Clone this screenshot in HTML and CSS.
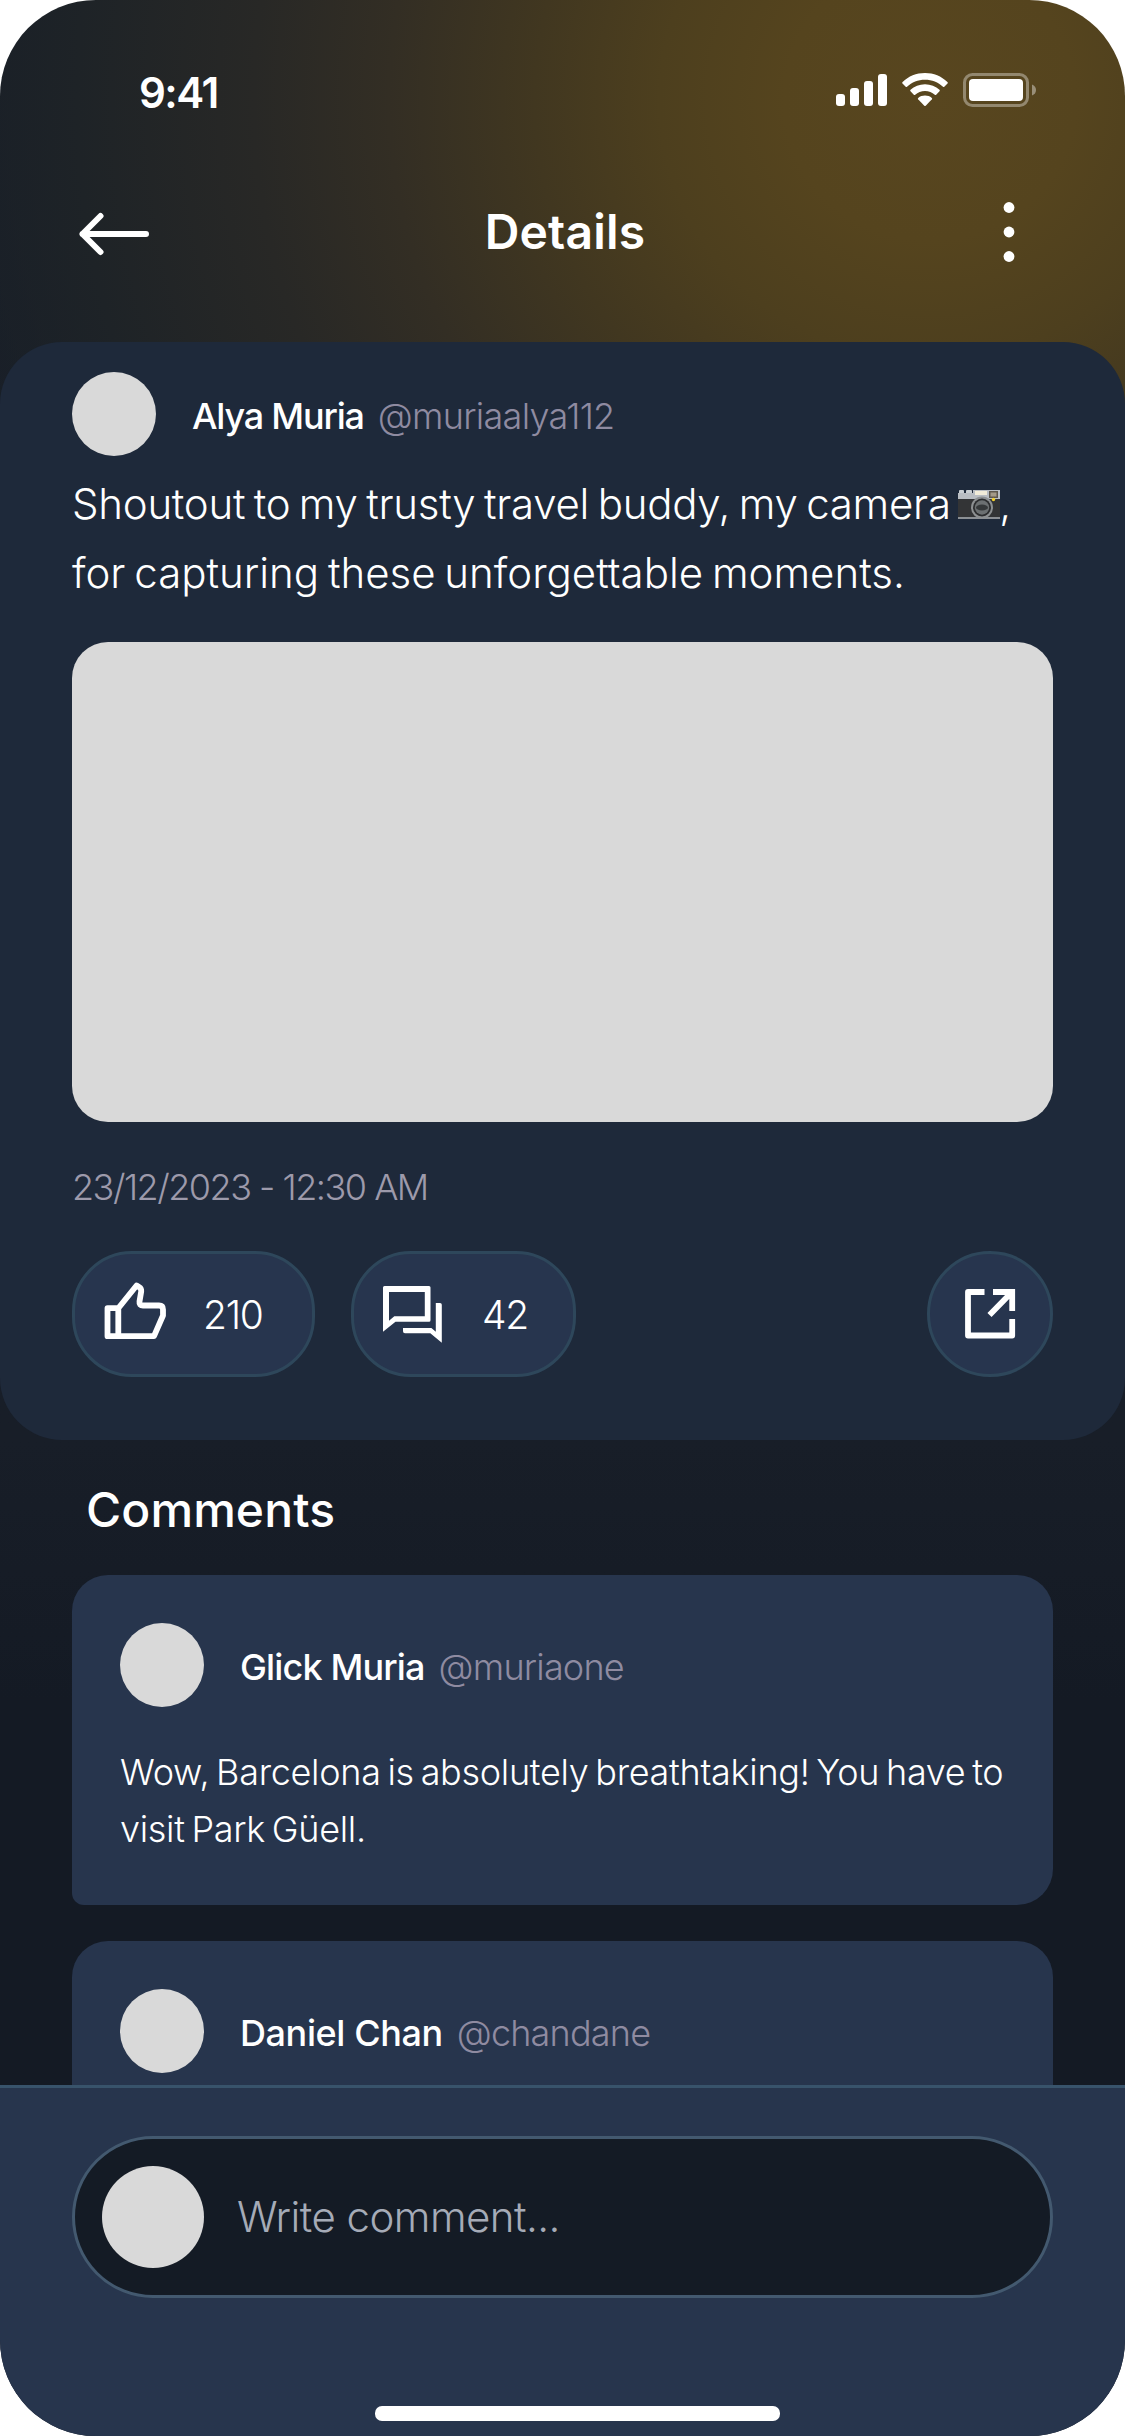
FILE: index.html
```
<!DOCTYPE html>
<html lang="en">
<head>
<meta charset="utf-8">
<title>Details</title>
<link rel="stylesheet" href="styles.css">
</head>
<body>
<div class="screen">
  <div class="status">
    <span class="time">9:41</span>
    <div class="status-icons">
      <svg width="51" height="34" viewBox="0 0 51 34" fill="#fff">
        <rect x="0" y="21" width="9" height="12" rx="3"/>
        <rect x="14" y="15" width="9" height="18" rx="3"/>
        <rect x="28" y="8" width="9" height="25" rx="3"/>
        <rect x="42" y="1" width="9" height="32" rx="3"/>
      </svg>
      <svg width="46" height="34" viewBox="0 0 46 34" fill="#fff">
        <path d="M23 0C31.700 0 39.500 3.300 45.400 8.900Q46.200 9.700 45.500 10.500L42.300 13.800Q41.700 14.400 41 13.800C36.200 9.300 30 6.800 23 6.800S9.800 9.300 5 13.800Q4.300 14.400 3.700 13.800L.5 10.500Q-.2 9.700.6 8.900C6.500 3.300 14.300 0 23 0Z"/>
        <path d="M23 11.200C28.600 11.200 33.700 13.300 37.500 16.800Q38.200 17.600 37.500 18.300L34.200 21.700Q33.500 22.400 32.800 21.700C30.200 19.300 26.800 17.900 23 17.900S15.800 19.300 13.200 21.700Q12.500 22.400 11.800 21.700L8.500 18.300Q7.800 17.600 8.500 16.800C12.300 13.300 17.400 11.200 23 11.200Z"/>
        <path d="M23 22.600C25.600 22.600 27.900 23.400 29.800 24.900Q30.500 25.600 29.900 26.300L23.700 32.700Q23 33.300 22.300 32.700L16.100 26.300Q15.500 25.600 16.200 24.900C18.100 23.400 20.400 22.600 23 22.600Z"/>
      </svg>
      <svg width="73" height="34" viewBox="0 0 73 34" fill="#fff">
        <rect x="1.500" y="1.500" width="63" height="31" rx="8" fill="none" stroke="#fff" stroke-opacity=".36" stroke-width="3"/>
        <rect x="6" y="6" width="54" height="22" rx="4"/>
        <path d="M69 11.500Q73 13 73 17T69 22.500Z" fill-opacity=".4"/>
      </svg>
    </div>
  </div>

  <div class="nav">
    <svg class="back" width="72" height="48" viewBox="0 0 72 48" fill="none" stroke="#fff" stroke-width="6" stroke-linecap="round" stroke-linejoin="round">
      <path d="M68 24H4.500M22.500 6L4.500 24L22.500 42"/>
    </svg>
    <h1 class="title">Details</h1>
    <svg width="12" height="60" viewBox="0 0 12 60" fill="#fff">
      <circle cx="6" cy="5.500" r="5.400"/><circle cx="6" cy="30" r="5.400"/><circle cx="6" cy="54.500" r="5.400"/>
    </svg>
  </div>

  <article class="post">
    <div class="author">
      <span class="avatar"></span>
      <span class="name name-alya">Alya Muria</span>
      <span class="handle handle-alya">@muriaalya112</span>
    </div>
    <p class="post-text"><span class="line-one">Shoutout to my trusty travel buddy, my camera <svg class="camera" width="42" height="30" viewBox="0 0 42 30"><rect x="1" y="0" width="5" height="5" rx="1" fill="#c9ced2"/><rect x="8" y="0" width="6" height="5" rx="1" fill="#c9ced2"/><rect x="0" y="3" width="42" height="7" fill="#b9bdc2"/><rect x="15" y="0" width="27" height="7" fill="#b9bdc2"/><rect x="0" y="9" width="42" height="19" fill="#333436"/><rect x="0" y="27" width="42" height="2" fill="#8b8f94"/><rect x="17" y="1" width="12" height="4" fill="#f2ecd9"/><rect x="31" y="1" width="9" height="7" fill="#5e574c"/><rect x="32.500" y="2.500" width="6" height="4" fill="#a49a88"/><circle cx="24" cy="17.500" r="11" fill="#8d9092"/><circle cx="24" cy="17.500" r="9" fill="#2c2d2f"/><circle cx="24" cy="17.500" r="7.200" fill="#6c7072"/><ellipse cx="24" cy="17.500" rx="6" ry="3" fill="#35383a"/><circle cx="35.500" cy="9.500" r="1.700" fill="#f2cf2c"/></svg>,</span><br>for capturing these unforgettable moments.</p>
    <div class="photo"></div>
    <p class="date">23/12/2023 - 12:30 AM</p>
    <div class="actions">
      <div class="pill pill-like">
        <svg width="66" height="66" viewBox="0 1 66 66" fill="none" stroke="#fff" stroke-width="5.800" stroke-linejoin="round">
          <path d="M16.300 28.200H5.500V56.200H52L61 35.500V29.500Q61 25.500 57 25.500H41Q37 25.500 37.500 21.500L39.200 11.500Q39.500 8.500 37 7L34.600 5.500L16.300 28.200V56.200"/>
        </svg>
        <span class="count">210</span>
      </div>
      <div class="pill pill-chat">
        <svg width="66" height="66" viewBox="1 -2 66 66" fill="#fff">
          <path fill-rule="evenodd" d="M3 4.500Q3 3 4.500 3H49Q50.500 3 50.500 4.500V37.200Q50.500 38.700 49 38.700H15.500L3 48.700ZM9 9V37.800L14.300 33.200H44.800V9Z"/>
          <path d="M55.800 20H60Q61.800 20 61.800 21.800V59.700L50.300 50.300H25Q23 50.300 23 48.300V45H51.400L55.800 48.700Z"/>
        </svg>
        <span class="count">42</span>
      </div>
      <div class="pill pill-share">
        <svg width="60" height="60" viewBox="0 0 60 60" fill="none" stroke="#fff" stroke-width="5.800">
          <path stroke-linejoin="round" d="M24.500 8H8V51.500H52.200V35"/>
          <path d="M33 8H52.200V27M29.500 31L51.500 8.500"/>
        </svg>
      </div>
    </div>
  </article>

  <section class="comments">
    <h2 class="heading">Comments</h2>
    <div class="list">
      <article class="comment">
        <div class="author">
          <span class="avatar"></span>
          <span class="name">Glick Muria</span>
          <span class="handle">@muriaone</span>
        </div>
        <p class="comment-text">Wow, Barcelona is absolutely breathtaking! You have to<br>visit Park Güell.</p>
      </article>
      <article class="comment">
        <div class="author">
          <span class="avatar"></span>
          <span class="name name-daniel">Daniel Chan</span>
          <span class="handle">@chandane</span>
        </div>
      </article>
    </div>
  </section>

  <footer class="composer">
    <div class="field">
      <span class="avatar avatar-large"></span>
      <span class="placeholder">Write comment...</span>
    </div>
    <div class="home-indicator"></div>
  </footer>
</div>
</body>
</html>
```
FILE: styles.css
```
* { box-sizing: border-box; }

body {
  margin: 0;
  background: #fff;
  font-family: Inter, "Open Sans", sans-serif;
  color: #fff;
}

h1, h2, p { margin: 0; }
svg { display: block; flex: none; }

.screen {
  width: 1125px;
  height: 2436px;
  border-radius: 96px;
  overflow: hidden;
  display: flex;
  flex-direction: column;
  background:
    radial-gradient(1040px 1000px at 930px 100px,
      #58461f 0%, #55441e 14%, #4d3f1e 26%, #413720 38%, #332e24 52%,
      #282826 65%, #1e2327 82%, rgba(23, 29, 39, 0) 100%),
    linear-gradient(#161d28 0, #181e28 1440px, #141a24 1700px);
}

.status {
  height: 60px;
  margin-top: 63px;
  padding: 0 89px 0 139px;
  display: flex;
  justify-content: space-between;
}
.time {
  font-size: 42px;
  font-weight: 600;
  line-height: 60px;
  letter-spacing: -1.5px;
}
.status-icons {
  height: 54px;
  display: flex;
  align-items: center;
  gap: 15px;
}

.nav {
  height: 60px;
  margin-top: 79px;
  padding: 0 110px 0 78px;
  display: grid;
  grid-template-columns: 1fr auto 1fr;
  align-items: center;
}
.nav > :last-child { justify-self: end; }
.back { margin-top: 4px; }
.title {
  margin-left: 37px;
  font-size: 48px;
  font-weight: 600;
  line-height: 60px;
  letter-spacing: 0.2px;
}

.post {
  flex: none;
  height: 1098px;
  margin-top: 80px;
  padding: 30px 72px 0;
  border-radius: 62px;
  background: #1e293a;
}

.author {
  height: 84px;
  display: flex;
  align-items: center;
  font-size: 36px;
  line-height: 44px;
}
.avatar {
  flex: none;
  width: 84px;
  height: 84px;
  border-radius: 50%;
  background: #d9d9d9;
}
.name {
  margin: 3px 0 0 36px;
  font-weight: 550;
  letter-spacing: -0.85px;
}
.name-alya { letter-spacing: -1.2px; }
.name-daniel { letter-spacing: -0.4px; }
.handle {
  margin: 3px 0 0 14px;
  font-weight: 300;
  letter-spacing: -0.8px;
  color: #8f8ba1;
}
.handle-alya { letter-spacing: -0.7px; }

.post-text {
  margin-top: 13px;
  font-size: 42px;
  font-weight: 300;
  line-height: 69px;
  letter-spacing: 0;
  word-spacing: -3px;
  white-space: nowrap;
}
.line-one { letter-spacing: -0.26px; }
.camera {
  display: inline-block;
  margin: 0 -1px;
  vertical-align: -1px;
}
.photo {
  height: 480px;
  margin-top: 35px;
  border-radius: 36px;
  background: #d9d9d9;
}
.date {
  margin-top: 41px;
  font-size: 36px;
  font-weight: 300;
  line-height: 48px;
  letter-spacing: -1.5px;
  color: #9d9aab;
}

.actions {
  display: flex;
  gap: 36px;
  margin-top: 40px;
}
.pill {
  height: 126px;
  padding-left: 27px;
  display: flex;
  align-items: center;
  gap: 36px;
  border: 3px solid #2e475b;
  border-radius: 60px;
  background: #27354e;
}
.pill-like { width: 243px; }
.pill-chat { width: 225px; }
.pill-share {
  width: 126px;
  margin-left: auto;
  padding: 0;
  justify-content: center;
  border-radius: 50%;
}
.count {
  margin: 2px 0 0 -1px;
  font-size: 39px;
  font-weight: 300;
  line-height: 48px;
  letter-spacing: -1.3px;
}

.comments {
  flex: 1;
  min-height: 0;
  overflow: hidden;
  padding: 40px 72px 0;
}
.heading {
  margin-left: 14px;
  font-size: 48px;
  font-weight: 500;
  line-height: 60px;
  letter-spacing: 0.1px;
}
.list {
  display: flex;
  flex-direction: column;
  gap: 36px;
  margin-top: 35px;
}
.comment {
  height: 330px;
  padding: 48px;
  border-radius: 36px 36px 36px 12px;
  background: #27354d;
}
.comment-text {
  margin-top: 37px;
  font-size: 36px;
  font-weight: 300;
  line-height: 57px;
  letter-spacing: -0.3px;
  word-spacing: -3px;
  white-space: nowrap;
}

.composer {
  flex: none;
  height: 351px;
  padding: 48px 72px 15px;
  display: flex;
  flex-direction: column;
  justify-content: space-between;
  border-top: 3px solid #38536b;
  background: #27354d;
}
.field {
  height: 162px;
  padding-left: 27px;
  display: flex;
  align-items: center;
  gap: 33px;
  border: 3px solid #43596f;
  border-radius: 81px;
  background: #141b25;
}
.avatar-large {
  width: 102px;
  height: 102px;
}
.placeholder {
  font-size: 42px;
  font-weight: 300;
  line-height: 60px;
  letter-spacing: -0.55px;
  color: #a5abb7;
}
.home-indicator {
  align-self: center;
  width: 405px;
  height: 15px;
  margin-left: 30px;
  border-radius: 7px;
  background: #fff;
}
```
